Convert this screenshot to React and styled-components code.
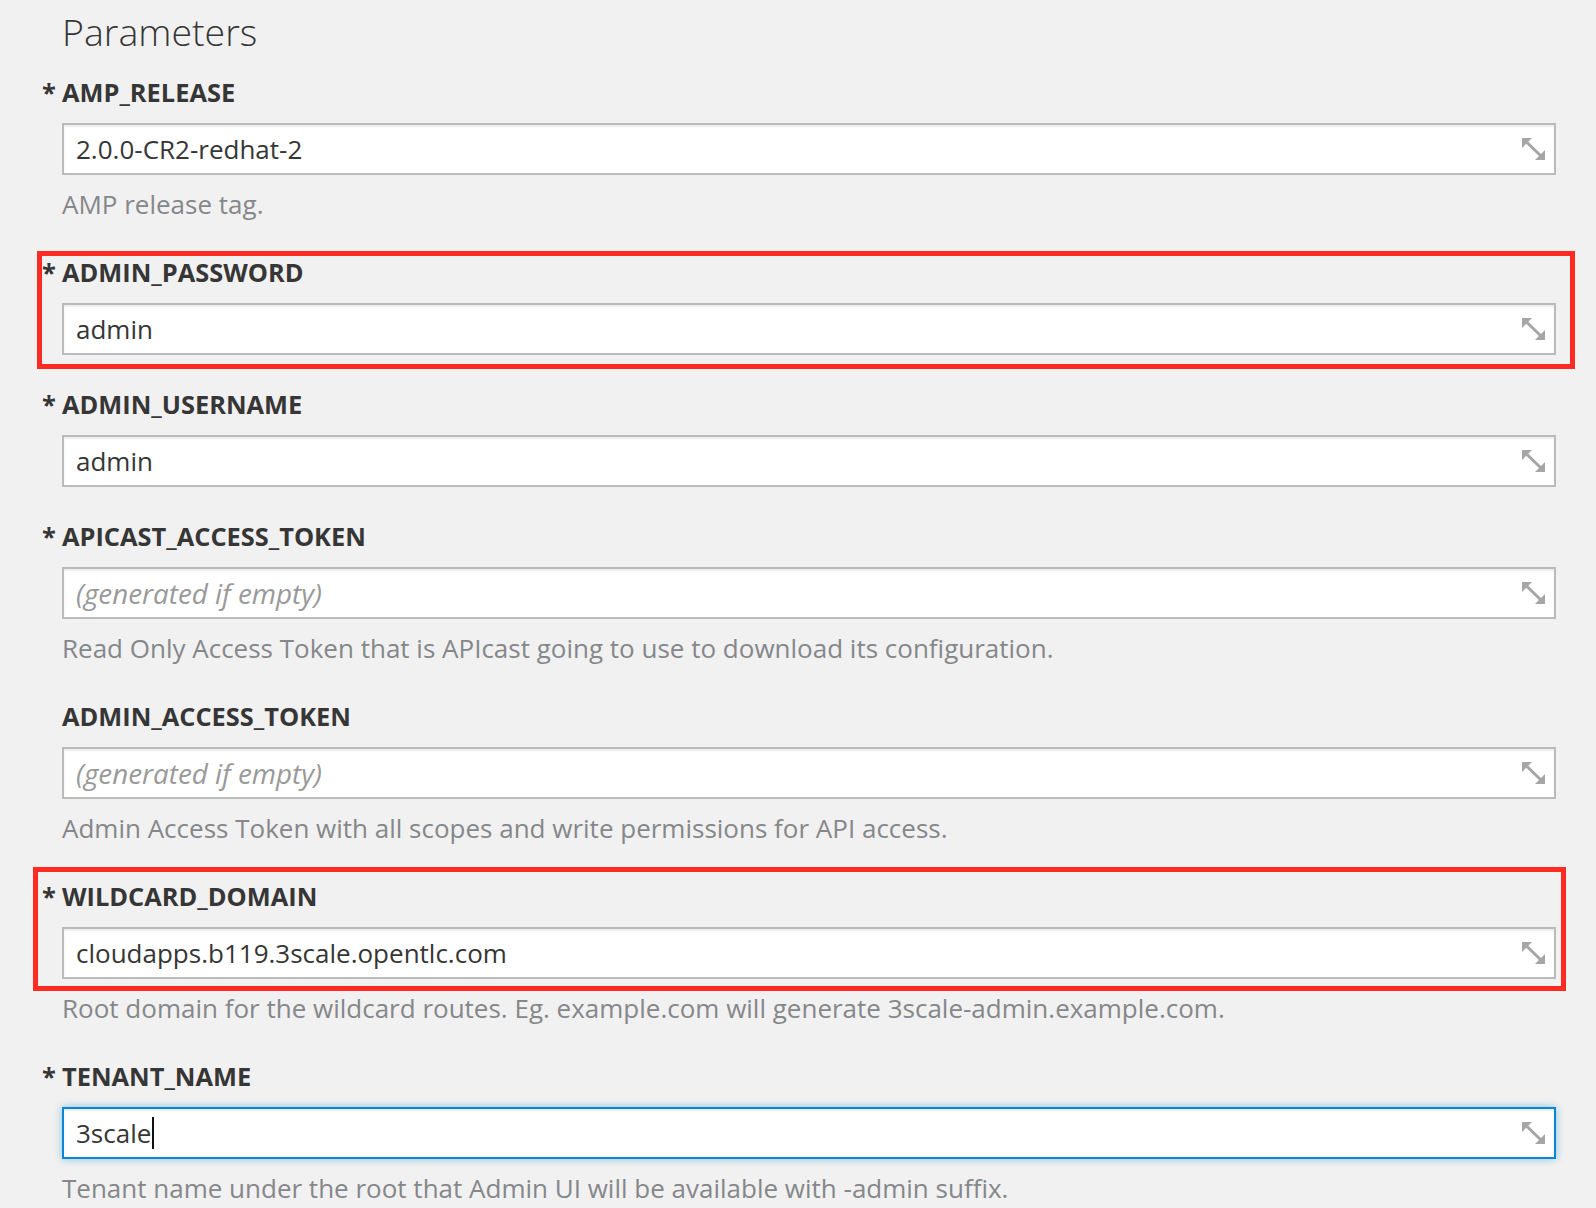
import styled, { createGlobalStyle } from 'styled-components';

const GlobalStyle = createGlobalStyle`
  html, body {
    margin: 0;
    padding: 0;
    background: #f1f1f1;
  }
  body {
    font-family: "Open Sans", "Liberation Sans", sans-serif;
    color: #363636;
  }
`;

const params = [
  { name: 'AMP_RELEASE', required: true, value: '2.0.0-CR2-redhat-2', help: 'AMP release tag.' },
  { name: 'ADMIN_PASSWORD', required: true, value: 'admin', mark: { top: -4, right: -19, bottom: -14, left: -25 } },
  { name: 'ADMIN_USERNAME', required: true, value: 'admin' },
  {
    name: 'APICAST_ACCESS_TOKEN',
    required: true,
    placeholder: '(generated if empty)',
    help: 'Read Only Access Token that is APIcast going to use to download its configuration.',
  },
  {
    name: 'ADMIN_ACCESS_TOKEN',
    placeholder: '(generated if empty)',
    help: 'Admin Access Token with all scopes and write permissions for API access.',
  },
  {
    name: 'WILDCARD_DOMAIN',
    required: true,
    value: 'cloudapps.b119.3scale.opentlc.com',
    help: 'Root domain for the wildcard routes. Eg. example.com will generate 3scale-admin.example.com.',
    mark: { top: -12, right: -10, bottom: 36, left: -29 },
  },
  {
    name: 'TENANT_NAME',
    required: true,
    value: '3scale',
    focused: true,
    help: 'Tenant name under the root that Admin UI will be available with -admin suffix.',
  },
];

function ExpandIcon() {
  return (
    <svg width="23" height="22" viewBox="0 0 23 22" fill="#a6a6a6">
      <polygon points="0,0 10,0 0,10" />
      <polygon points="23,22 13,22 23,12" />
      <path d="M4 3.5 L19.5 18.5" stroke="#a6a6a6" strokeWidth="3" />
    </svg>
  );
}

function App() {
  return (
    <>
      <GlobalStyle />
      <Page>
        <Title>Parameters</Title>
        {params.map((p) => (
          <FormGroup key={p.name} $mark={p.mark}>
            <Label>
              {p.required && <Star>*</Star>}
              {p.name}
            </Label>
            <InputBox $focused={p.focused}>
              {p.value ? (
                <Value>
                  {p.value}
                  {p.focused && <Caret />}
                </Value>
              ) : (
                <Placeholder>{p.placeholder}</Placeholder>
              )}
              <ExpandIcon />
            </InputBox>
            {p.help && <Help>{p.help}</Help>}
          </FormGroup>
        ))}
      </Page>
    </>
  );
}

const Page = styled.div`
  padding: 11px 40px 0 62px;
  min-height: 1208px;
  box-sizing: border-box;
`;

const Title = styled.h2`
  margin: 0 0 22px 0;
  font-size: 37.5px;
  line-height: 42px;
  font-weight: 300;
  color: #363636;
`;

const FormGroup = styled.div`
  position: relative;
  margin-bottom: 32px;

  ${({ $mark }) =>
    $mark &&
    `
    &::after {
      content: "";
      position: absolute;
      top: ${$mark.top}px;
      right: ${$mark.right}px;
      bottom: ${$mark.bottom}px;
      left: ${$mark.left}px;
      border: 5px solid #fd2b21;
      pointer-events: none;
    }
  `}
`;

const Label = styled.div`
  font-size: 25.4px;
  line-height: 34px;
  font-weight: 700;
  color: #363636;
  margin-bottom: 14px;
`;

const Star = styled.span`
  display: inline-block;
  width: 20px;
  margin-left: -20px;
`;

const InputBox = styled.div`
  display: flex;
  align-items: center;
  justify-content: space-between;
  height: 52px;
  box-sizing: border-box;
  padding: 0 9px 0 12px;
  background: #fff;
  border: 2px solid ${({ $focused }) => ($focused ? '#0a87d2' : '#bbbbbb')};
  box-shadow: ${({ $focused }) =>
    $focused
      ? 'inset 0 2px 2px rgba(0,0,0,.075), 0 0 8px rgba(0,136,206,.45)'
      : 'inset 0 2px 2px rgba(0,0,0,.075)'};
  font-size: 26px;
`;

const Value = styled.span`
  display: flex;
  align-items: center;
  color: #363636;
`;

const Caret = styled.span`
  display: inline-block;
  width: 2px;
  height: 32px;
  margin-left: 1px;
  background: #111;
`;

const Placeholder = styled.span`
  color: #999;
  font-style: italic;
  font-size: 27.8px;
`;

const Help = styled.div`
  margin-top: 12px;
  padding-bottom: 2px;
  font-size: 26px;
  line-height: 34px;
  color: #85878a;
`;

export default App;
